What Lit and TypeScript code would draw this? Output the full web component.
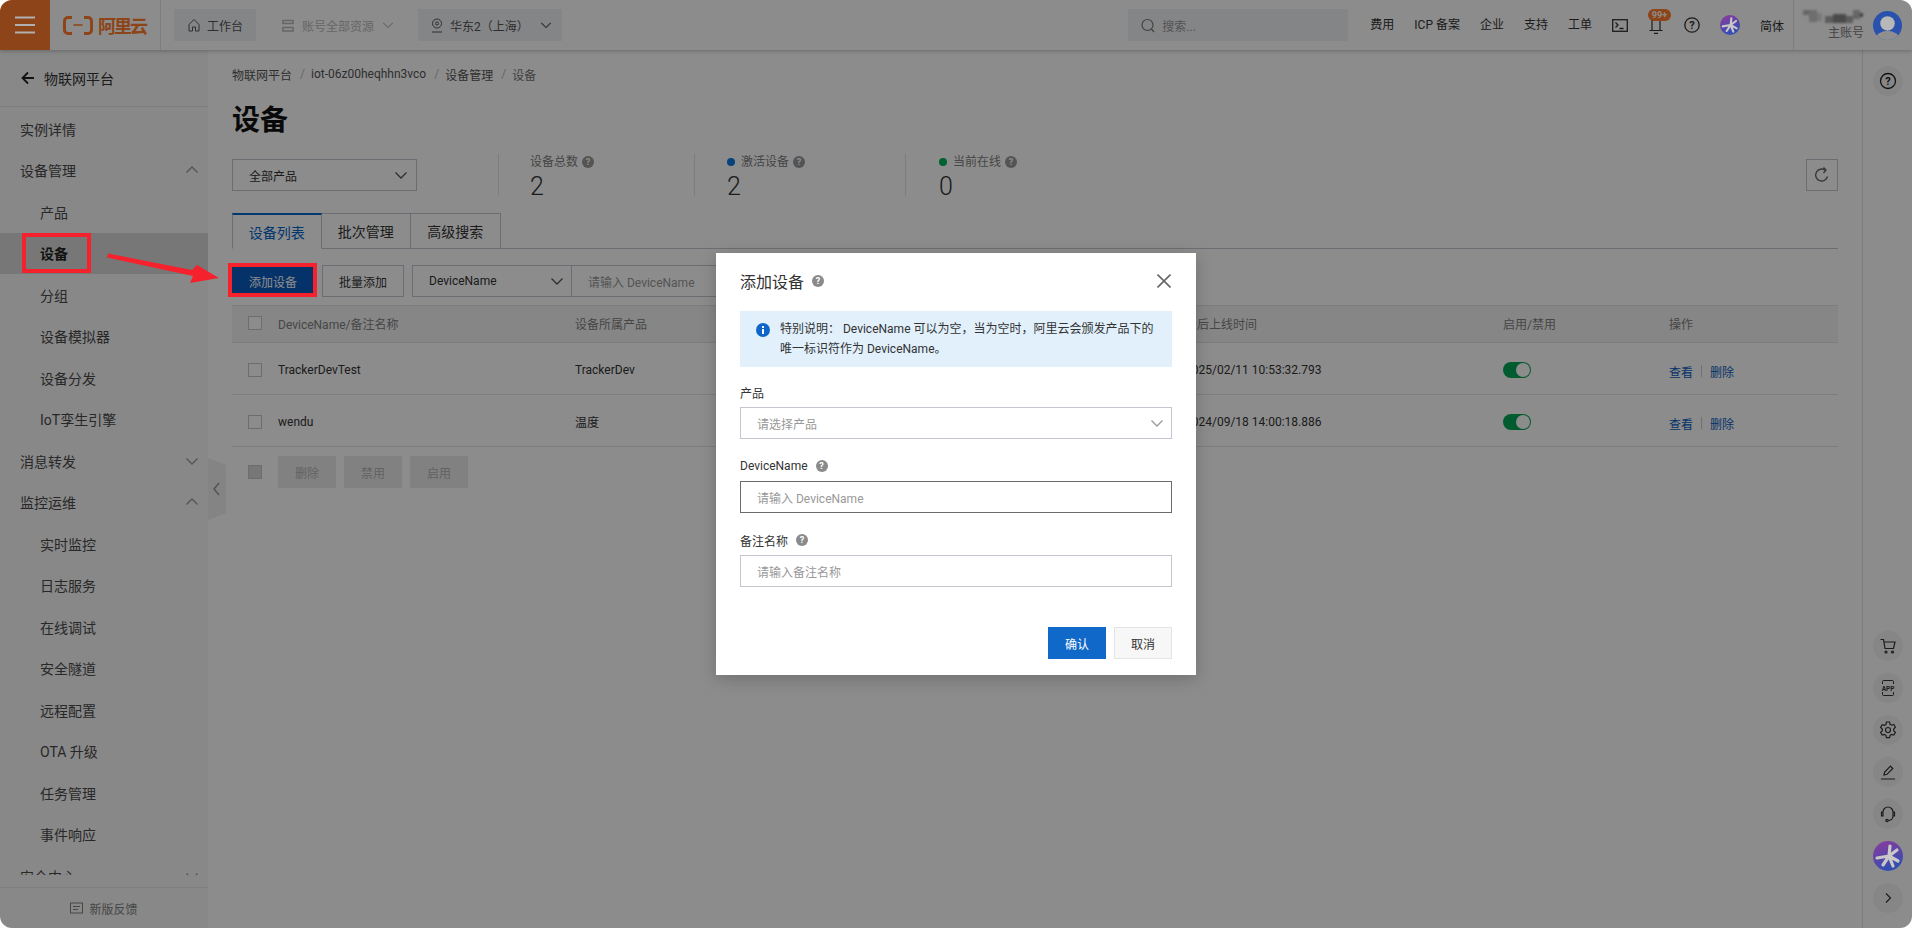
import { css, html, LitElement } from "lit";
import { customElement } from "lit/decorators.js";

interface NavItem {
  label: string;
  level: 1 | 2;
  chevron?: "up" | "down";
  active?: boolean;
}

const NAV: NavItem[] = [
  { label: "实例详情", level: 1 },
  { label: "设备管理", level: 1, chevron: "up" },
  { label: "产品", level: 2 },
  { label: "设备", level: 2, active: true },
  { label: "分组", level: 2 },
  { label: "设备模拟器", level: 2 },
  { label: "设备分发", level: 2 },
  { label: "IoT孪生引擎", level: 2 },
  { label: "消息转发", level: 1, chevron: "down" },
  { label: "监控运维", level: 1, chevron: "up" },
  { label: "实时监控", level: 2 },
  { label: "日志服务", level: 2 },
  { label: "在线调试", level: 2 },
  { label: "安全隧道", level: 2 },
  { label: "远程配置", level: 2 },
  { label: "OTA 升级", level: 2 },
  { label: "任务管理", level: 2 },
  { label: "事件响应", level: 2 },
  { label: "安全中心", level: 1, chevron: "down" },
];

const ROWS = [
  { name: "TrackerDevTest", product: "TrackerDev", time: "2025/02/11 10:53:32.793" },
  { name: "wendu", product: "温度", time: "2024/09/18 14:00:18.886" },
];

const chevron = (dir: "up" | "down", size = 14) => html`<svg class="chev" width=${size} height=${size} viewBox="0 0 14 14" fill="none" stroke="currentColor" stroke-width="1.3">
  <path d=${dir === "down" ? "M1.5 4.5 7 10l5.5-5.5" : "M1.5 9.5 7 4l5.5 5.5"}></path>
</svg>`;

const help = () => html`<span class="help">?</span>`;

const star = (size: number) => html`<svg class="lift" width=${size} height=${size} viewBox="0 0 30 30">
  <defs>
    <linearGradient id="st" x1="0.2" y1="0" x2="0.6" y2="1">
      <stop offset="0" stop-color="#8a3c9c"></stop>
      <stop offset="0.5" stop-color="#5c45a8"></stop>
      <stop offset="1" stop-color="#2b4fb4"></stop>
    </linearGradient>
  </defs>
  <circle cx="15" cy="15" r="15" fill="url(#st)"></circle>
  <path d="M16 15 17 5M16 15 4 17M16 15 24 9M16 15 25 20M16 15 20 25M16 15 10 24" stroke="#c8c8c8" stroke-width="3.2" stroke-linecap="round" fill="none"></path>
</svg>`;

@customElement("app-root")
export class AppRoot extends LitElement {
  static override styles = css`
    :host {
      display: block;
      width: 1912px;
      height: 928px;
      background: #fff;
      font-family: Roboto, "Noto Sans CJK SC", sans-serif;
      font-size: 12px;
      color: #333;
    }
    .window {
      position: relative;
      width: 1912px;
      height: 928px;
      overflow: hidden;
      border-radius: 12px;
      background: #fff;
      display: flex;
      flex-direction: column;
    }
    svg { display: block; flex: none; }
    .lift { position: relative; z-index: 6; }
    .help {
      display: inline-block;
      flex: none;
      width: 12px;
      height: 12px;
      border-radius: 50%;
      background: #999;
      color: #fff;
      font-size: 9px;
      font-weight: 700;
      line-height: 12px;
      text-align: center;
    }
    .dialog .help { background: #8a8a8a; }

    /* top bar */
    .topbar {
      height: 50px;
      flex: none;
      display: flex;
      align-items: center;
      background: #fff;
      box-shadow: 0 1px 4px rgba(0, 0, 0, 0.25);
      position: relative;
    }
    .burger {
      width: 50px;
      height: 50px;
      background: #ff7c2c;
      display: flex;
      align-items: center;
      justify-content: center;
    }
    .logo {
      width: 111px;
      height: 50px;
      box-sizing: border-box;
      border-right: 1px solid #e3e4e6;
      display: flex;
      align-items: center;
      padding-left: 13px;
      gap: 5px;
      color: #ff7c2c;
      font-size: 18px;
      font-weight: 700;
      letter-spacing: -2px;
    }
    .tb-btn {
      height: 32px;
      display: flex;
      align-items: center;
      background: #f1f3f6;
      color: #555;
      box-sizing: border-box;
    }
    .home { margin-left: 13px; width: 82px; padding-left: 14px; gap: 7px; }
    .account { margin-left: 26px; width: 136px; background: none; color: #bbb; gap: 8px; }
    .region { width: 144px; padding-left: 13px; gap: 7px; }
    .region .chev { margin-left: 4px; }
    .search {
      margin-left: auto;
      width: 220px;
      height: 32px;
      background: #f1f3f6;
      display: flex;
      align-items: center;
      padding-left: 13px;
      gap: 7px;
      box-sizing: border-box;
      color: #999;
    }
    .tb-right {
      margin-left: 22px;
      display: flex;
      align-items: center;
      height: 50px;
      color: #333;
    }
    .tb-right .link { margin-right: 20px; white-space: nowrap; line-height: 18px; }
    .bell { position: relative; margin: 0 20px 0 20px; width: 16px; height: 14px; margin-top: 3px; }
    .badge {
      position: absolute;
      left: 0;
      top: -11px;
      width: 23px;
      height: 12px;
      border-radius: 6px;
      background: #ff7c2c;
      color: #fff;
      font-size: 9px;
      font-weight: 700;
      line-height: 12px;
      text-align: center;
    }
    .star-top { margin-left: 20px; margin-right: 20px; }
    .tb-user {
      margin-left: 9px;
      height: 50px;
      width: 119px;
      box-sizing: border-box;
      border-left: 1px solid #e3e4e6;
      display: flex;
      align-items: center;
      padding-left: 9px;
      gap: 9px;
    }
    .user-text { width: 61px; display: flex; flex-direction: column; align-items: flex-end; color: #808080; }
    .user-text span { line-height: 16px; }
    .mosaic { filter: blur(1px); margin-bottom: 2px; }

    /* frame */
    .frame { flex: 1; min-height: 0; display: flex; }
    .sidebar {
      width: 208px;
      flex: none;
      background: #f7f7f7;
      display: flex;
      flex-direction: column;
      font-size: 14px;
    }
    .side-head {
      height: 57px;
      flex: none;
      box-sizing: border-box;
      border-bottom: 1px solid #e3e4e6;
      display: flex;
      align-items: center;
      padding: 0 0 0 21px;
      gap: 10px;
    }
    .side-nav {
      flex: 1;
      min-height: 0;
      overflow: hidden;
      padding-top: 1px;
      margin-bottom: 12px;
    }
    .nav-row {
      height: 41.5px;
      display: flex;
      align-items: center;
      justify-content: space-between;
      padding: 0 9px 0 20px;
      box-sizing: border-box;
      color: #4a4a4a;
      white-space: nowrap;
    }
    .nav-row.l2 { padding-left: 40px; }
    .nav-row.active { background: #d9d9d9; font-weight: 700; color: #222; }
    .nav-row .chev { color: #999; }
    .side-foot {
      height: 41px;
      flex: none;
      box-sizing: border-box;
      border-top: 1px solid #e3e4e6;
      display: flex;
      align-items: center;
      justify-content: center;
      gap: 6px;
      font-size: 12px;
      color: #808080;
    }

    .collapse {
      position: absolute;
      left: 208px;
      top: 458px;
      z-index: 1;
    }

    /* main */
    .main {
      flex: 1;
      min-width: 0;
      padding: 15px 24px 0;
      box-sizing: border-box;
    }
    .crumbs {
      display: flex;
      align-items: center;
      height: 18px;
      color: #555;
      gap: 8px;
    }
    .crumbs i { font-style: normal; color: #bbb; width: 3px; text-align: center; }
    .crumbs .last { color: #777; }
    .title {
      margin: 18px 0 0;
      font-size: 28px;
      font-weight: 700;
      line-height: 40px;
      color: #111;
    }
    .stats {
      margin-top: 13px;
      height: 42px;
      display: flex;
      align-items: center;
    }
    .select {
      border: 1px solid #c4c6cf;
      height: 32px;
      box-sizing: border-box;
      background: #fff;
      display: flex;
      align-items: center;
      justify-content: space-between;
    }
    .select .chev { color: #555; }
    .product { width: 185px; padding: 0 8px 0 16px; }
    .stat {
      height: 42px;
      border-left: 1px solid #e3e4e6;
      box-sizing: border-box;
      display: flex;
      flex-direction: column;
      justify-content: space-between;
      color: #808080;
    }
    .stat .lab { display: flex; align-items: center; gap: 4px; line-height: 16px; }
    .stat .val { font-size: 25px; line-height: 24px; margin-bottom: -3px; color: #333; font-weight: 300; }
    .s1 { margin-left: 81px; width: 196px; padding-left: 31px; }
    .s2 { width: 211px; padding-left: 32px; }
    .s3 { padding-left: 33px; width: 300px; }
    .dot { width: 8px; height: 8px; border-radius: 50%; margin-right: 2px; }
    .refresh {
      margin-left: auto;
      width: 32px;
      height: 32px;
      box-sizing: border-box;
      border: 1px solid #c4c6cf;
      display: flex;
      align-items: center;
      justify-content: center;
      color: #666;
    }
    .tabs {
      margin-top: 17px;
      height: 36px;
      display: flex;
      border-bottom: 1px solid #c4c6cf;
      box-sizing: border-box;
      font-size: 14px;
    }
    .tab {
      width: 89.5px;
      height: 36px;
      box-sizing: border-box;
      border: 1px solid #c4c6cf;
      border-left: 0;
      display: flex;
      align-items: center;
      justify-content: center;
      background: #fff;
      color: #333;
    }
    .tab.on {
      border-left: 1px solid #c4c6cf;
      border-top: 2px solid #0064c8;
      border-bottom-color: #fff;
      color: #0064c8;
    }
    .toolbar { margin-top: 16px; height: 32px; display: flex; }
    .btn {
      height: 32px;
      width: 82px;
      box-sizing: border-box;
      border: 1px solid #c4c6cf;
      background: #fff;
      display: flex;
      align-items: center;
      justify-content: center;
      color: #333;
    }
    .btn.primary { background: #0a5cc0; border-color: #0a5cc0; color: #fff; }
    .btn + .btn { margin-left: 8px; }
    .toolbar .key { margin-left: 8px; width: 160px; padding: 0 7px 0 16px; }
    .toolbar .query {
      margin-left: -1px;
      width: 300px;
      padding-left: 16px;
      color: #999;
      justify-content: flex-start;
    }
    .table { margin-top: 8px; border-top: 1px solid #e3e4e6; }
    .row {
      display: grid;
      grid-template-columns: 46px 297px 610px 318px 166px 1fr;
      align-items: center;
      border-bottom: 1px solid #e3e4e6;
      height: 52px;
      padding-top: 2px;
      box-sizing: border-box;
    }
    .row.head { height: 37px; padding: 0 0 2px; background: #f4f4f4; color: #808080; }
    .row > :first-child { padding-left: 16px; }
    .check {
      display: block;
      width: 14px;
      height: 14px;
      box-sizing: border-box;
      border: 1px solid #c4c6cf;
      background: #fff;
    }
    .check.off { background: #d9d9d9; }
    .switch {
      display: block;
      width: 28px;
      height: 16px;
      border-radius: 8px;
      background: #00a854;
      position: relative;
    }
    .switch::after {
      content: "";
      position: absolute;
      right: 1px;
      top: 1px;
      width: 14px;
      height: 14px;
      border-radius: 50%;
      background: #fff;
    }
    .ops { display: flex; align-items: center; color: #0a5cc0; margin-top: 3px; }
    .ops i { width: 1px; height: 12px; background: #d0d0d0; margin: 0 8px; }
    .bulk { display: flex; align-items: center; height: 32px; margin-top: 9px; padding-left: 16px; }
    .bulk .check { margin-right: 16px; }
    .bulk .btn {
      width: 58px;
      border: 0;
      background: #ebebeb;
      color: #b3b3b3;
      margin-left: 0;
      margin-right: 8px;
    }

    /* right rail */
    .rail {
      width: 50px;
      flex: none;
      box-sizing: border-box;
      border-left: 1px solid #e3e4e6;
      background: #fff;
      display: flex;
      flex-direction: column;
      align-items: center;
      padding-top: 16px;
    }
    .rail-btn {
      width: 30px;
      height: 30px;
      flex: none;
      border-radius: 50%;
      background: #f4f4f4;
      display: flex;
      align-items: center;
      justify-content: center;
      margin-bottom: 12px;
      color: #333;
    }
    .rail-btn.last { margin-bottom: 15px; }
    .rail-star { margin-bottom: 12px; }
    .rail-spacer { flex: 1; }

    /* dialog */
    .mask {
      position: absolute;
      inset: 0;
      background: rgba(0, 0, 0, 0.45);
      z-index: 5;
    }
    .dialog {
      position: absolute;
      left: 716px;
      top: 253px;
      width: 480px;
      height: 422px;
      background: #fff;
      box-shadow: 0 4px 16px rgba(0, 0, 0, 0.2);
      z-index: 6;
      box-sizing: border-box;
      padding: 0 24px;
      display: flex;
      flex-direction: column;
    }
    .d-head {
      height: 58px;
      flex: none;
      padding-bottom: 2px;
      box-sizing: border-box;
      display: flex;
      align-items: center;
      font-size: 16px;
      gap: 8px;
      color: #333;
    }
    .d-close { margin-left: auto; margin-right: 1px; color: #666; }
    .alert {
      height: 56px;
      flex: none;
      box-sizing: border-box;
      background: #e1f0fb;
      padding: 8px 16px;
      display: flex;
      gap: 10px;
      line-height: 20px;
      color: #333;
    }
    .alert svg { margin-top: 4px; }
    .label {
      height: 18px;
      display: flex;
      align-items: center;
      gap: 8px;
      color: #333;
      margin-bottom: 6px;
    }
    .label.first { margin-top: 16px; }
    .label.more { margin-top: 18px; }
    .field {
      height: 32px;
      flex: none;
      box-sizing: border-box;
      border: 1px solid #c4c6cf;
      display: flex;
      align-items: center;
      justify-content: space-between;
      padding: 0 7px 0 16px;
      color: #999;
    }
    .field.focus { border-color: #6b6b6b; }
    .d-foot { margin-top: auto; margin-bottom: 16px; display: flex; justify-content: flex-end; gap: 8px; }
    .d-foot .btn { width: 58px; margin: 0; }
    .d-foot .ok { background: #1068c9; border-color: #1068c9; color: #fff; }
    .d-foot .cancel { background: #f7f7f7; border-color: #e3e4e6; }

    /* annotations drawn on the screenshot */
    .mark { position: absolute; border: 4px solid #f5222d; box-sizing: border-box; z-index: 7; }
    .mark.a { left: 22px; top: 233px; width: 69px; height: 40px; }
    .mark.b { left: 228px; top: 263px; width: 89px; height: 34px; }
    .arrow { position: absolute; left: 100px; top: 245px; z-index: 7; }
  `;

  private _renderTopbar() {
    return html`
      <header class="topbar">
        <div class="burger">
          <svg class="lift" width="20" height="18" viewBox="0 0 20 18" fill="#b0b0b0"><rect y="0.500" width="20" height="2"></rect><rect y="8" width="20" height="2"></rect><rect y="15.500" width="20" height="2"></rect></svg>
        </div>
        <div class="logo">
          <svg width="30" height="19" viewBox="0 0 30 19" fill="none" stroke="currentColor" stroke-width="3"><path d="M9 1.500H5A3.500 3.500 0 0 0 1.500 5v9A3.500 3.500 0 0 0 5 17.500h4M21 1.500h4A3.500 3.500 0 0 1 28.500 5v9a3.500 3.500 0 0 1-3.500 3.500h-4"></path><path d="M10.500 9h9" stroke-width="1.500"></path></svg>
          <span>阿里云</span>
        </div>
        <div class="tb-btn home">
          <svg width="12" height="14" viewBox="0 0 12 14" fill="none" stroke="currentColor"><path d="M1 6.500 6 1.500l5 5V13H7.500V9h-3v4H1z"></path></svg>
          工作台
        </div>
        <div class="tb-btn account">
          <svg width="12" height="13" viewBox="0 0 12 13" fill="none" stroke="currentColor" stroke-width="1.600"><path d="M1 1.500h10v3H1zM1 8.500h10v3.500H1z"></path></svg>
          账号全部资源 ${chevron("down", 12)}
        </div>
        <div class="tb-btn region">
          <svg width="12" height="15" viewBox="0 0 12 15" fill="none" stroke="currentColor"><circle cx="6" cy="5.500" r="4.500"></circle><circle cx="6" cy="5.500" r="1.500"></circle><path d="M1 14h10"></path></svg>
          华东2（上海） ${chevron("down", 12)}
        </div>
        <div class="search">
          <svg width="14" height="15" viewBox="0 0 14 15" fill="none" stroke="#777" stroke-width="1.200"><circle cx="6.500" cy="7" r="5.500"></circle><path d="M10.500 11l2.500 3"></path></svg>
          搜索...
        </div>
        <div class="tb-right">
          <span class="link">费用</span>
          <span class="link">ICP 备案</span>
          <span class="link">企业</span>
          <span class="link">支持</span>
          <span class="link">工单</span>
          <svg width="16" height="13" viewBox="0 0 16 13" fill="none" stroke="#333" stroke-width="1.300"><rect x="0.700" y="0.700" width="14.600" height="11.600"></rect><path d="M3.500 3.500l2.500 2.500-2.500 2.500M7.500 9.500h4"></path></svg>
          <div class="bell">
            <svg width="16" height="14" viewBox="0 0 16 14" fill="none" stroke="#333" stroke-width="1.200"><path d="M4 10V0h8v10M1.500 10.500h13M6 13.300h4"></path></svg>
            <span class="badge">99+</span>
          </div>
          <svg width="16" height="16" viewBox="0 0 16 16"><circle cx="8" cy="8" r="7.200" fill="none" stroke="#333" stroke-width="1.300"></circle><text x="8" y="12" font-size="11" font-weight="700" text-anchor="middle" fill="#333">?</text></svg>
          <div class="star-top">${star(20)}</div>
          <span>简体</span>
          <div class="tb-user">
            <div class="user-text">
              <svg class="mosaic" width="61" height="13" viewBox="0 0 61 13"><rect x="0" y="0" width="6" height="5" fill="#bbb"></rect><rect x="6" y="0" width="8" height="12" fill="#c8c8c8"></rect><rect x="14" y="3" width="5" height="8" fill="#ddd"></rect><rect x="22" y="6" width="8" height="7" fill="#aaa"></rect><rect x="30" y="4" width="13" height="9" fill="#888"></rect><rect x="43" y="6" width="7" height="7" fill="#aaa"></rect><rect x="50" y="0" width="7" height="9" fill="#bbb"></rect><rect x="57" y="3" width="3" height="4" fill="#777"></rect></svg>
              <span>主账号</span>
            </div>
            <svg class="lift" width="29" height="29" viewBox="0 0 28 28"><defs><clipPath id="av"><circle cx="14" cy="14" r="14"></circle></clipPath></defs><circle cx="14" cy="14" r="14" fill="#2a52ad"></circle><g clip-path="url(#av)"><circle cx="14" cy="12" r="7" fill="#b8b8b8"></circle><ellipse cx="14" cy="28" rx="12" ry="9" fill="#8f8f8f"></ellipse></g></svg>
          </div>
        </div>
      </header>
    `;
  }

  private _renderSidebar() {
    return html`
      <aside class="sidebar">
        <div class="side-head">
          <svg width="13" height="14" viewBox="0 0 13 14" fill="none" stroke="#222" stroke-width="1.800"><path d="M7 1.500 1.500 7 7 12.500M2 7h11"></path></svg>
          物联网平台
        </div>
        <nav class="side-nav">
          ${NAV.map(
            (item) => html`
              <div class="nav-row ${item.level === 2 ? "l2" : ""} ${item.active ? "active" : ""}">
                <span>${item.label}</span>
                ${item.chevron ? chevron(item.chevron) : ""}
              </div>
            `,
          )}
        </nav>
        <div class="side-foot">
          <svg width="13" height="13" viewBox="0 0 13 13" fill="none" stroke="currentColor"><rect x="0.500" y="1" width="12" height="10"></rect><path d="M3 4.500h7M3 7.500h5"></path></svg>
          新版反馈
        </div>
      </aside>
    `;
  }

  private _renderMain() {
    return html`
      <main class="main">
        <div class="crumbs">
          <span>物联网平台</span><i>/</i><span>iot-06z00heqhhn3vco</span><i>/</i><span>设备管理</span><i>/</i><span class="last">设备</span>
        </div>
        <h1 class="title">设备</h1>
        <div class="stats">
          <div class="select product"><span>全部产品</span>${chevron("down")}</div>
          <div class="stat s1">
            <div class="lab">设备总数 ${help()}</div>
            <div class="val">2</div>
          </div>
          <div class="stat s2">
            <div class="lab"><span class="dot" style="background:#0a7ae0"></span>激活设备 ${help()}</div>
            <div class="val">2</div>
          </div>
          <div class="stat s3">
            <div class="lab"><span class="dot" style="background:#00b35a"></span>当前在线 ${help()}</div>
            <div class="val">0</div>
          </div>
          <div class="refresh">
            <svg width="16" height="16" viewBox="0 0 16 16" fill="none" stroke="currentColor" stroke-width="1.400"><path d="M13.500 9.500A6 6 0 1 1 11 3M9.500 0.500 12 3 9.500 6"></path></svg>
          </div>
        </div>
        <div class="tabs">
          <div class="tab on">设备列表</div>
          <div class="tab">批次管理</div>
          <div class="tab">高级搜索</div>
        </div>
        <div class="toolbar">
          <div class="btn primary">添加设备</div>
          <div class="btn">批量添加</div>
          <div class="select key"><span>DeviceName</span>${chevron("down")}</div>
          <div class="select query">请输入 DeviceName</div>
        </div>
        <div class="table">
          <div class="row head">
            <div><span class="check"></span></div>
            <div>DeviceName/备注名称</div>
            <div>设备所属产品</div>
            <div>最后上线时间</div>
            <div>启用/禁用</div>
            <div>操作</div>
          </div>
          ${ROWS.map(
            (row) => html`
              <div class="row">
                <div><span class="check"></span></div>
                <div>${row.name}</div>
                <div>${row.product}</div>
                <div>${row.time}</div>
                <div><span class="switch"></span></div>
                <div class="ops"><span>查看</span><i></i><span>删除</span></div>
              </div>
            `,
          )}
        </div>
        <div class="bulk">
          <span class="check off"></span>
          <div class="btn">删除</div>
          <div class="btn">禁用</div>
          <div class="btn">启用</div>
        </div>
      </main>
    `;
  }

  private _renderRail() {
    return html`
      <aside class="rail">
        <div class="rail-btn">
          <svg width="18" height="18" viewBox="0 0 18 18"><circle cx="9" cy="9" r="7.500" fill="none" stroke="#222" stroke-width="1.300"></circle><text x="9" y="13" font-size="11" font-weight="700" text-anchor="middle" fill="#222">?</text></svg>
        </div>
        <div class="rail-spacer"></div>
        <div class="rail-btn">
          <svg width="16" height="16" viewBox="0 0 16 16" fill="none" stroke="currentColor" stroke-width="1.200"><path d="M0.500 1.500h3l1.500 9h8.500l1.500-6.500H4"></path><circle cx="6" cy="14" r="1"></circle><circle cx="12.500" cy="14" r="1"></circle></svg>
        </div>
        <div class="rail-btn">
          <svg width="18" height="18" viewBox="0 0 18 18" fill="none" stroke="currentColor"><path d="M3.500 5V2.500a1 1 0 0 1 1-1h9a1 1 0 0 1 1 1V5M3.500 13v2.500a1 1 0 0 0 1 1h9a1 1 0 0 0 1-1V13"></path><text x="9" y="11.500" font-size="6.500" font-weight="700" text-anchor="middle" fill="currentColor" stroke="none">APP</text></svg>
        </div>
        <div class="rail-btn">
          <svg width="18" height="18" viewBox="0 0 18 18" fill="none" stroke="currentColor" stroke-width="1.200"><path d="M7.400 1h3.200l.5 2.300 1.500.9 2.200-.7 1.600 2.800-1.700 1.600v1.800l1.700 1.600-1.600 2.800-2.200-.7-1.500.9-.5 2.300H7.400l-.5-2.300-1.500-.9-2.200.7-1.600-2.800 1.700-1.600V8.100L1.600 6.500l1.600-2.800 2.200.7 1.500-.9z"></path><circle cx="9" cy="9" r="2.500"></circle></svg>
        </div>
        <div class="rail-btn">
          <svg width="16" height="16" viewBox="0 0 16 16" fill="none" stroke="currentColor" stroke-width="1.200"><path d="M1 15h14M4 11l.7-3L10.500 2.200l2.300 2.300L7 10.300z"></path></svg>
        </div>
        <div class="rail-btn">
          <svg width="16" height="18" viewBox="0 0 16 18" fill="none" stroke="currentColor" stroke-width="1.200"><path d="M3 8V7a5 5 0 0 1 10 0v1M3 7H1.500v4H3zM13 7h1.500v4H13zM13 11c0 2.500-2 4.500-5 4.500"></path><circle cx="7" cy="15.500" r="1.200"></circle></svg>
        </div>
        <div class="rail-star">${star(30)}</div>
        <div class="rail-btn last">
          <svg width="12" height="12" viewBox="0 0 12 12" fill="none" stroke="currentColor" stroke-width="1.200"><path d="M4 1.500 8.500 6 4 10.500"></path></svg>
        </div>
      </aside>
    `;
  }

  private _renderDialog() {
    return html`
      <div class="dialog">
        <div class="d-head">
          <span>添加设备</span>${help()}
          <svg class="d-close" width="14" height="14" viewBox="0 0 14 14" stroke="currentColor" stroke-width="1.600"><path d="M0.500 0.500l13 13M13.500 0.500l-13 13"></path></svg>
        </div>
        <div class="alert">
          <svg width="14" height="14" viewBox="0 0 14 14"><circle cx="7" cy="7" r="7" fill="#0f66c8"></circle><rect x="6" y="6" width="2" height="5" fill="#fff"></rect><rect x="6" y="3" width="2" height="2" fill="#fff"></rect></svg>
          <div>特别说明： DeviceName 可以为空，当为空时，阿里云会颁发产品下的<br />唯一标识符作为 DeviceName。</div>
        </div>
        <div class="label first">产品</div>
        <div class="field"><span>请选择产品</span>${chevron("down")}</div>
        <div class="label more">DeviceName ${help()}</div>
        <div class="field focus"><span>请输入 DeviceName</span></div>
        <div class="label more">备注名称 ${help()}</div>
        <div class="field"><span>请输入备注名称</span></div>
        <div class="d-foot">
          <div class="btn ok">确认</div>
          <div class="btn cancel">取消</div>
        </div>
      </div>
    `;
  }

  override render() {
    return html`
      <div class="window">
        ${this._renderTopbar()}
        <div class="frame">
          ${this._renderSidebar()}
          ${this._renderMain()}
          ${this._renderRail()}
        </div>
        <svg class="collapse" width="18" height="62" viewBox="0 0 18 62">
          <path d="M0 0l18 7v48L0 62z" fill="#f0f0f0"></path>
          <path d="M11 25l-5 6 5 6" fill="none" stroke="#999" stroke-width="1.500"></path>
        </svg>
        <div class="mask"></div>
        ${this._renderDialog()}
        <div class="mark a"></div>
        <div class="mark b"></div>
        <svg class="arrow" width="125" height="45" viewBox="0 0 125 45">
          <path d="M8 8.500 L92 25 L97 20 L119 33 L90 38 L93 31 L7 12.500z" fill="#f5222d"></path>
        </svg>
      </div>
    `;
  }
}
